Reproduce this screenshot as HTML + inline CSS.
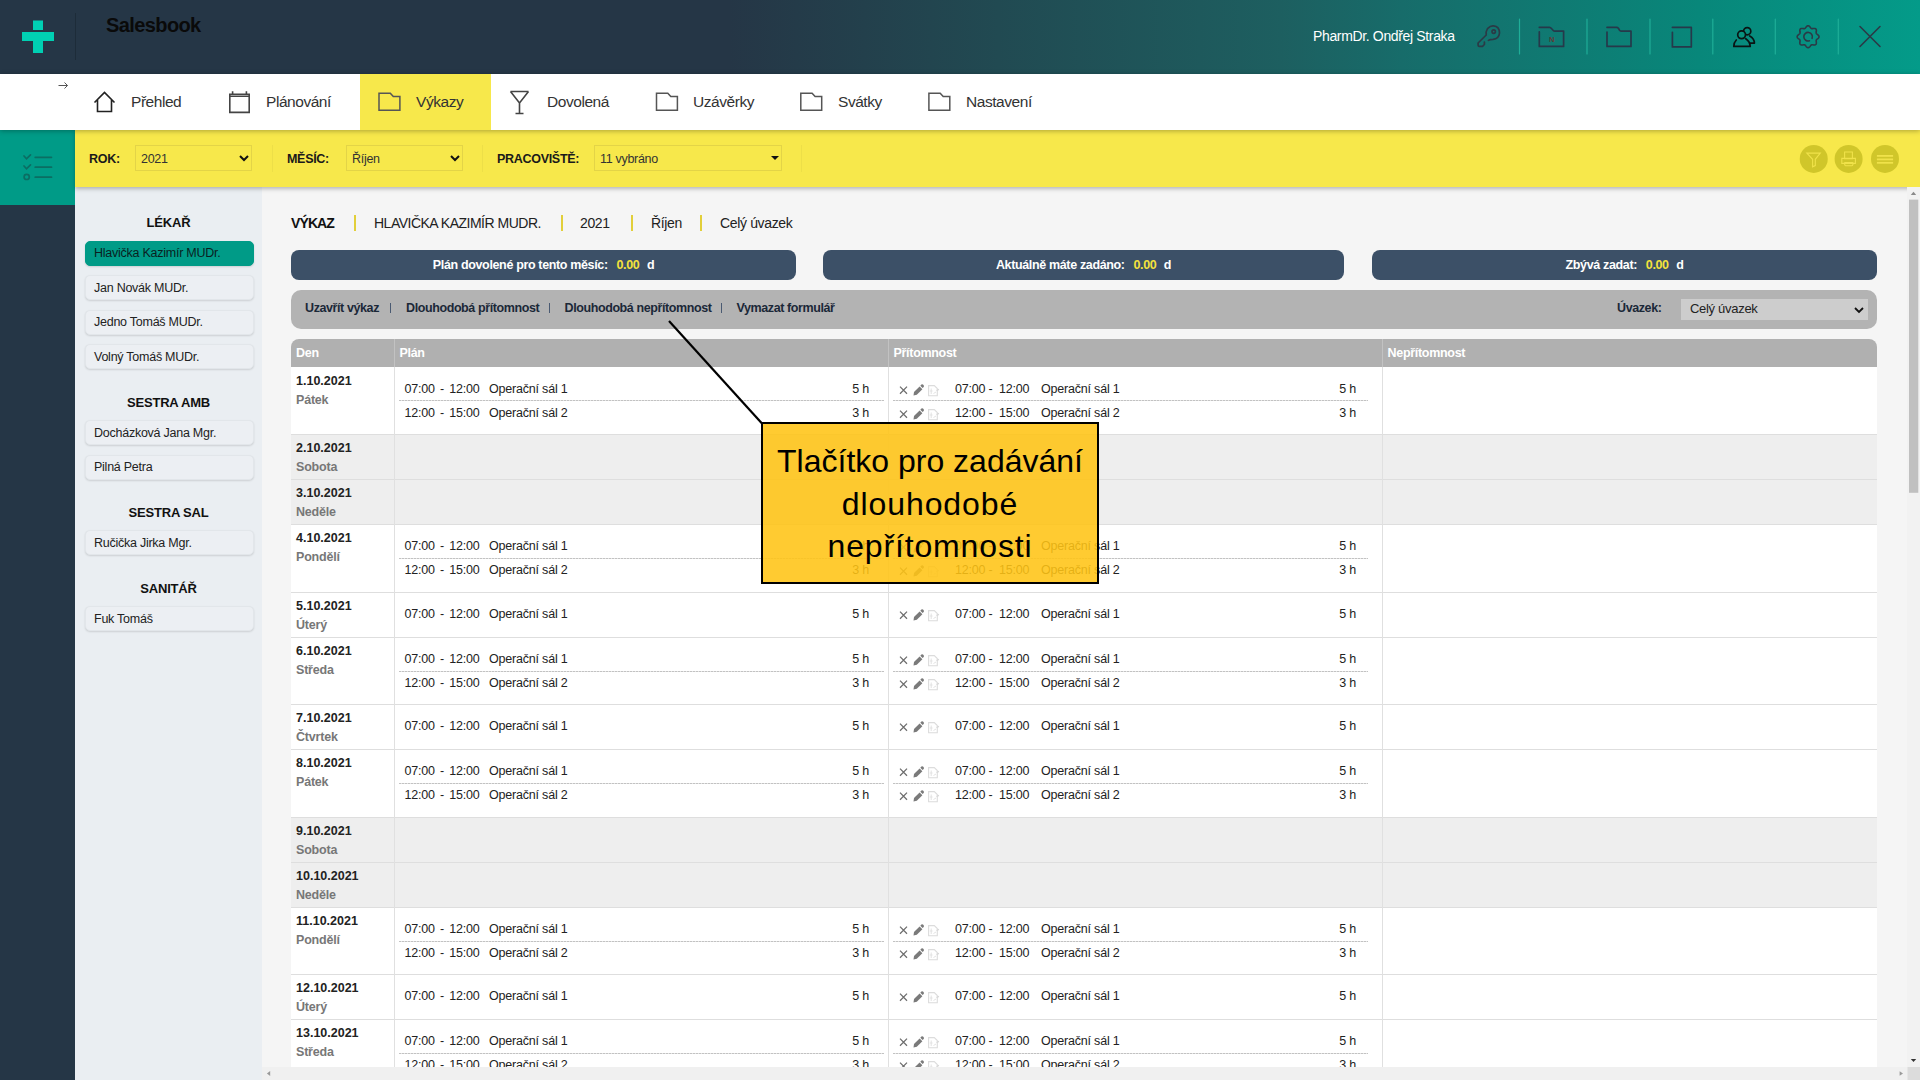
<!DOCTYPE html>
<html><head><meta charset="utf-8">
<style>
*{box-sizing:border-box;margin:0;padding:0}
html,body{width:1920px;height:1080px;overflow:hidden;background:#f5f5f5;font-family:"Liberation Sans",sans-serif;color:#222}
.abs{position:absolute}
#hdr{left:0;top:0;width:1920px;height:74px;background:linear-gradient(to right,#253646 0%,#253646 38%,#214a52 52%,#1d5f60 66.7%,#176c6a 73%,#08877a 88.5%,#049b89 100%)}
#nav{left:0;top:74px;width:1920px;height:56px;background:#fff}
#fbar{left:75px;top:130px;width:1845px;height:57px;background:#f7e84b;box-shadow:0 2px 4px rgba(0,0,0,.25);z-index:3}
#tealblk{left:0;top:130px;width:75px;height:75px;background:#009b87;z-index:2}
#lside{left:0;top:205px;width:75px;height:875px;background:#253646}
#emp{left:75px;top:186px;width:187px;height:894px;background:#eaeef2}
#main{left:262px;top:186px;width:1646px;height:880px;background:#f5f5f5;overflow:hidden}
.navt{position:absolute;top:19px;font-size:15.5px;color:#333;letter-spacing:-0.45px}
#nav{box-shadow:0 1px 5px rgba(0,0,0,.3);z-index:4}
.flab{position:absolute;top:22px;font-size:12.5px;font-weight:bold;color:#1a1a1a;letter-spacing:-0.3px}
.fsel{position:absolute;top:15px;height:25.5px;border:1px solid #e3d447;padding:5.5px 0 0 5px;font-size:12.5px;color:#333;letter-spacing:-0.3px}
.chev{position:absolute}
.fsep{position:absolute;top:15px;width:1px;height:27px;background:#eddf48}
.eh{position:absolute;left:0;width:187px;text-align:center;font-size:13px;margin-top:1px;font-weight:bold;color:#111;letter-spacing:-0.2px}
.eb{position:absolute;left:10px;width:169px;height:25px;border-radius:5px;background:#eceff3;border:1px solid #e2e6ea;box-shadow:0 1px 2px rgba(0,0,0,.13);padding:4.5px 0 0 8px;font-size:12.5px;color:#222;letter-spacing:-0.25px;white-space:nowrap}
.eb.act{background:#009b87;border-color:#009b87;color:#0a1f1f}
.ttl{position:absolute;top:29px;font-size:14px;color:#222;letter-spacing:-0.35px;white-space:nowrap}
.tsep{position:absolute;top:29px;width:2px;height:16px;background:#e2cf3a}
.ibar{position:absolute;top:63.5px;height:30px;border-radius:8px;background:#3c5067;color:#fff;font-size:12.5px;font-weight:bold;text-align:center;padding-top:8px;letter-spacing:-0.35px;white-space:nowrap}
.ibar span{color:#f4e23c;margin:0 1.2px 0 2.5px}
#tbar{left:29px;top:104px;width:1586px;height:38.5px;border-radius:10px;background:#b3b3b3}
.tb{position:absolute;top:11px;font-size:12.5px;font-weight:bold;color:#1b2838;letter-spacing:-0.4px;white-space:nowrap}
.tbs{position:absolute;top:13px;width:1px;height:10px;background:#4a5a72}
.usel{position:absolute;left:1390px;top:8.5px;width:187px;height:21px;background:#cdcdcd;font-size:13px;color:#222;padding:2px 0 0 9px;letter-spacing:-0.3px}
#tbl{position:absolute;left:0;top:0;width:1920px;height:1067px;overflow:hidden;pointer-events:none}
.thd{position:absolute;background:#b0b0b0;border-radius:8px 8px 0 0}
.tht{position:absolute;top:345.5px;font-size:12.5px;font-weight:bold;color:#fff;letter-spacing:-0.3px;line-height:15px}
.thv{position:absolute;top:339px;width:1px;height:28px;background:#c2c2c2}
.tr{position:absolute;left:291px;width:1586px;background:#fff;border-bottom:1px solid #dedede;box-sizing:content-box}
.tr.we{background:#eeeeee}
.tv{position:absolute;top:367px;width:1px;height:720px;background:#e0e0e0}
.td{position:absolute;left:296px;font-size:12.5px;font-weight:bold;color:#222;line-height:15px}
.tdn{position:absolute;left:296px;font-size:12.5px;font-weight:bold;color:#777;line-height:15px;letter-spacing:-0.2px}
.te{position:absolute;font-size:12.5px;color:#222;line-height:15px;white-space:nowrap;letter-spacing:-0.2px}
.te.hr{width:100px;text-align:right}
.ico{position:absolute}
.dash{position:absolute;height:1px;background:repeating-linear-gradient(to right,#c2c2c2 0 2px,#e4e4e4 2px 3px)}
#vscroll{left:1907px;top:187px;width:13px;height:880px;background:#f2f2f2;z-index:5}
#hscroll{left:262px;top:1067px;width:1658px;height:13px;background:#f0f0f0;z-index:5}
#callout{left:761px;top:422px;width:338px;height:162px;border:2.5px solid #000;background:rgba(255,196,20,.88);z-index:21;font-size:32px;line-height:42.7px;text-align:center;color:#000;padding-top:16px;letter-spacing:0}
</style></head>
<body>
<div id="hdr" class="abs">
  <svg class="abs" style="left:0;top:0" width="80" height="74">
    <rect x="33" y="20.5" width="10" height="9.5" fill="#00d0b3"/>
    <rect x="22" y="32" width="32" height="9" fill="#00d0b3"/>
    <rect x="33" y="41" width="10" height="12" fill="#00d0b3"/>
    <line x1="75.5" y1="13" x2="75.5" y2="60" stroke="#1d2c39" stroke-width="1"/>
  </svg>
  <div class="abs" style="left:106px;top:13.5px;font-size:20px;font-weight:bold;color:#0a0a0a;letter-spacing:-0.6px">Salesbook</div>
  <div class="abs" style="left:1313px;top:28px;font-size:14px;color:#fff;letter-spacing:-0.35px">PharmDr. Ondřej Straka</div>
  <svg class="abs" style="left:1460px;top:0" width="460" height="74" fill="none" stroke-linecap="round" stroke-linejoin="round">
    <g stroke="#1fae98" stroke-width="1.2">
      <line x1="59.5" y1="19" x2="59.5" y2="54"/>
      <line x1="127" y1="19" x2="127" y2="54"/>
      <line x1="190" y1="19" x2="190" y2="54"/>
      <line x1="252.8" y1="19" x2="252.8" y2="54"/>
      <line x1="315.3" y1="19" x2="315.3" y2="54"/>
      <line x1="378.3" y1="19" x2="378.3" y2="54"/>
    </g>
    <!-- key -->
    <g stroke="#2b3a46" stroke-width="1.7">
      <path d="M24.4 42 V44.5 L22.5 46.4 H19.5 Q18 46.4 18.1 44.5 V43 L26.2 35 Q25.7 31.5 27.5 28.6 Q30.5 25.6 33.5 25.9 Q39.5 26.5 39.5 33 Q39 38.8 33 39.4 Q30 39.4 28.4 40.4"/>
      <circle cx="33.7" cy="31.6" r="1.7"/>
    </g>
    <!-- folder N -->
    <g stroke="#26394a" stroke-width="1.7">
      <path d="M79.3 27.3 H89.5 Q90.5 27.3 91.5 28.5 L93 30.2 Q93.8 31.1 95 31.1 H103.6 V46.4 H79.3 V31.9"/>
    </g>
    <text x="89" y="41.6" font-size="7.6" font-weight="bold" fill="#5d3b36" font-family="Liberation Sans">N</text>
    <!-- folder -->
    <g stroke="#26394a" stroke-width="1.7">
      <path d="M147 27.3 H156.7 Q157.6 27.3 158.4 28.3 L159.6 30.2 Q160.4 31.2 161.5 31.2 H171 V46.4 H147 V32"/>
      <path d="M212.4 27.3 H231.3 V46.9 H212.4 V32.3"/>
    </g>
    <!-- users -->
    <g stroke="#0a1414" stroke-width="1.7">
      <circle cx="287.2" cy="31.2" r="3.6"/>
      <circle cx="281.6" cy="34.8" r="3.9" fill="#08917f"/>
      <path d="M276.3 40 Q273.8 42.5 273.8 46.4 H290.2 Q290 41.5 285.8 38.7"/>
      <path d="M289.7 35.9 Q294.4 38.5 294.4 43.1 H290.2"/>
    </g>
    <!-- gear -->
    <g stroke="#2b3a46" stroke-width="1.6">
      <path d="M359.05 36.70 L358.99 37.13 L358.82 37.54 L358.54 37.94 L358.20 38.30 L357.81 38.63 L357.41 38.94 L357.03 39.22 L356.71 39.50 L356.45 39.78 L356.28 40.09 L356.18 40.43 L356.16 40.81 L356.20 41.24 L356.26 41.70 L356.33 42.20 L356.37 42.71 L356.36 43.21 L356.27 43.68 L356.10 44.10 L355.84 44.44 L355.50 44.70 L355.08 44.87 L354.61 44.96 L354.11 44.97 L353.60 44.93 L353.10 44.86 L352.64 44.80 L352.21 44.76 L351.83 44.78 L351.49 44.88 L351.18 45.05 L350.90 45.31 L350.62 45.63 L350.34 46.01 L350.03 46.41 L349.70 46.80 L349.34 47.14 L348.94 47.42 L348.53 47.59 L348.10 47.65 L347.67 47.59 L347.26 47.42 L346.86 47.14 L346.50 46.80 L346.17 46.41 L345.86 46.01 L345.58 45.63 L345.30 45.31 L345.02 45.05 L344.71 44.88 L344.37 44.78 L343.99 44.76 L343.56 44.80 L343.10 44.86 L342.60 44.93 L342.09 44.97 L341.59 44.96 L341.12 44.87 L340.70 44.70 L340.36 44.44 L340.10 44.10 L339.93 43.68 L339.84 43.21 L339.83 42.71 L339.87 42.20 L339.94 41.70 L340.00 41.24 L340.04 40.81 L340.02 40.43 L339.92 40.09 L339.75 39.78 L339.49 39.50 L339.17 39.22 L338.79 38.94 L338.39 38.63 L338.00 38.30 L337.66 37.94 L337.38 37.54 L337.21 37.13 L337.15 36.70 L337.21 36.27 L337.38 35.86 L337.66 35.46 L338.00 35.10 L338.39 34.77 L338.79 34.46 L339.17 34.18 L339.49 33.90 L339.75 33.62 L339.92 33.31 L340.02 32.97 L340.04 32.59 L340.00 32.16 L339.94 31.70 L339.87 31.20 L339.83 30.69 L339.84 30.19 L339.93 29.72 L340.10 29.30 L340.36 28.96 L340.70 28.70 L341.12 28.53 L341.59 28.44 L342.09 28.43 L342.60 28.47 L343.10 28.54 L343.56 28.60 L343.99 28.64 L344.37 28.62 L344.71 28.52 L345.02 28.35 L345.30 28.09 L345.58 27.77 L345.86 27.39 L346.17 26.99 L346.50 26.60 L346.86 26.26 L347.26 25.98 L347.67 25.81 L348.10 25.75 L348.53 25.81 L348.94 25.98 L349.34 26.26 L349.70 26.60 L350.03 26.99 L350.34 27.39 L350.62 27.77 L350.90 28.09 L351.18 28.35 L351.49 28.52 L351.83 28.62 L352.21 28.64 L352.64 28.60 L353.10 28.54 L353.60 28.47 L354.11 28.43 L354.61 28.44 L355.08 28.53 L355.50 28.70 L355.84 28.96 L356.10 29.30 L356.27 29.72 L356.36 30.19 L356.37 30.69 L356.33 31.20 L356.26 31.70 L356.20 32.16 L356.16 32.59 L356.18 32.97 L356.28 33.31 L356.45 33.62 L356.71 33.90 L357.03 34.18 L357.41 34.46 L357.81 34.77 L358.20 35.10 L358.54 35.46 L358.82 35.86 L358.99 36.27 L359.05 36.70Z"/>
      <path d="M352.1 38.3 A4.3 4.3 0 1 0 349.4 40.8"/>
    </g>
    <!-- close -->
    <g stroke="#2b3a46" stroke-width="1.6">
      <path d="M400 26.5 L420 46.5 M420 26.5 L400 46.5"/>
    </g>
  </svg>
</div>
<div id="nav" class="abs">
  <svg class="abs" style="left:0;top:0" width="1100" height="56" fill="none" stroke="#333" stroke-width="1.6" stroke-linejoin="miter">
    <path d="M58.5 11.5 H67.5 M64.5 8.5 L67.5 11.5 L64.5 14.5" stroke="#555" stroke-width="1"/>
    <rect x="360" y="0" width="131" height="56" fill="#f7e84b" stroke="none"/>
    <!-- home -->
    <path d="M94.5 28.5 L104.5 18.5 L114.5 28.5 M97.5 25.5 V37.5 H111.5 V25.5" stroke="#222"/>
    <!-- calendar -->
    <path d="M229.8 20.2 H249.2 V38.4 H229.8 Z M232.6 17.2 V21 M246.4 17.2 V21 M229.8 22.2 H249.2" stroke="#444"/>
    <!-- folders -->
    <path d="M379 19.3 H390.3 L393.3 22.6 H399.9 V36.3 H379 Z" stroke="#555" stroke-width="1.5"/>
    <path d="M656.5 19.3 H667.8 L670.8 22.6 H677.4 V36.3 H656.5 Z" stroke="#555" stroke-width="1.5"/>
    <path d="M800.8 19.3 H812.1 L815.1 22.6 H821.7 V36.3 H800.8 Z" stroke="#555" stroke-width="1.5"/>
    <path d="M928.9 19.3 H940.2 L943.2 22.6 H949.8 V36.3 H928.9 Z" stroke="#555" stroke-width="1.5"/>
    <!-- martini -->
    <path d="M510.5 17.5 L528.5 17.5 M510.5 17.5 L519.5 29 L528.5 17.5 M519.5 29 V39.5 M515.5 39.5 H523.5" stroke="#444"/>
  </svg>
  <div class="navt" style="left:131px">Přehled</div>
  <div class="navt" style="left:266px">Plánování</div>
  <div class="navt" style="left:416px">Výkazy</div>
  <div class="navt" style="left:547px">Dovolená</div>
  <div class="navt" style="left:693px">Uzávěrky</div>
  <div class="navt" style="left:838px">Svátky</div>
  <div class="navt" style="left:966px">Nastavení</div>
</div>
<div id="tealblk" class="abs"><svg width="75" height="75" fill="none" stroke="#0b6e63" stroke-width="1.7" stroke-linecap="round">
<path d="M24 156 L26.5 158.8 L30.5 154.8" transform="translate(0,-130)"/>
<path d="M24 166 L26.5 168.8 L30.5 164.8" transform="translate(0,-130)"/>
<circle cx="26.7" cy="46.9" r="2.6"/>
<path d="M35.2 27.3 H51.5 M35.2 37.2 H51.5 M35.2 47.2 H51.5"/>
</svg></div>
<div id="fbar" class="abs">
  <div class="flab" style="left:14px">ROK:</div>
  <div class="fsel" style="left:60px;width:117px">2021<svg class="chev" width="10" height="7" style="left:103px;top:9px"><path d="M1 1 L5 5 L9 1" fill="none" stroke="#111" stroke-width="2"/></svg></div>
  <div class="fsep" style="left:197px"></div>
  <div class="flab" style="left:212px">MĚSÍC:</div>
  <div class="fsel" style="left:271px;width:117px">Říjen<svg class="chev" width="10" height="7" style="left:103px;top:9px"><path d="M1 1 L5 5 L9 1" fill="none" stroke="#111" stroke-width="2"/></svg></div>
  <div class="fsep" style="left:407px"></div>
  <div class="flab" style="left:422px">PRACOVIŠTĚ:</div>
  <div class="fsel" style="left:519px;width:188px">11 vybráno<svg class="chev" width="10" height="6" style="left:176px;top:9.5px"><path d="M0 0 L8 0 L4 4 Z" fill="#111"/></svg></div>
  <div class="fsep" style="left:726px"></div>
  <svg class="abs" style="left:1720px;top:0" width="125" height="56">
    <g fill="#d0c62a">
      <circle cx="18.75" cy="28.9" r="14"/>
      <circle cx="53.6" cy="28.9" r="14"/>
      <circle cx="90" cy="28.9" r="14"/>
    </g>
    <g fill="none" stroke="#f0e24a" stroke-width="1.1">
      <path d="M11.8 23.1 H25.3 L20.3 29.3 V35.6 L17.6 36.8 V29.3 Z"/>
      <path d="M49.6 22 H57.4 V28.6 H49.6 Z M46.8 28.4 H60.4 V33.4 H46.8 Z M49.8 32.5 H57.8 Q58.5 35.6 56.5 35.8 H50.8 Q49.3 35.6 49.8 32.5 Z"/>
    </g>
    <g stroke="#f0e24a" stroke-width="1.8">
      <line x1="81.9" y1="25.9" x2="98.1" y2="25.9"/>
      <line x1="81.9" y1="29.4" x2="98.1" y2="29.4"/>
      <line x1="81.9" y1="32.8" x2="98.1" y2="32.8"/>
    </g>
  </svg>
</div>
<div id="lside" class="abs"></div>
<div id="emp" class="abs">
  <div class="eh" style="top:28px">LÉKAŘ</div>
  <div class="eb act" style="top:54.5px">Hlavička Kazimír MUDr.</div>
  <div class="eb" style="top:89px">Jan Novák MUDr.</div>
  <div class="eb" style="top:123.5px">Jedno Tomáš MUDr.</div>
  <div class="eb" style="top:158px">Volný Tomáš MUDr.</div>
  <div class="eh" style="top:208px">SESTRA AMB</div>
  <div class="eb" style="top:234px">Docházková Jana Mgr.</div>
  <div class="eb" style="top:268.5px">Pilná Petra</div>
  <div class="eh" style="top:318px">SESTRA SAL</div>
  <div class="eb" style="top:344px">Ručička Jirka Mgr.</div>
  <div class="eh" style="top:394px">SANITÁŘ</div>
  <div class="eb" style="top:420px">Fuk Tomáš</div>
</div>
<div id="main" class="abs">
  <div class="ttl" style="left:29px;font-weight:bold;color:#111;letter-spacing:-0.9px">VÝKAZ</div>
  <div class="tsep" style="left:91.5px"></div>
  <div class="ttl" style="left:112px;letter-spacing:-0.5px">HLAVIČKA KAZIMÍR MUDR.</div>
  <div class="tsep" style="left:298.5px"></div>
  <div class="ttl" style="left:318px">2021</div>
  <div class="tsep" style="left:369px"></div>
  <div class="ttl" style="left:389px">Říjen</div>
  <div class="tsep" style="left:438px"></div>
  <div class="ttl" style="left:458px">Celý úvazek</div>

  <div class="ibar" style="left:29px;width:505px">Plán dovolené pro tento měsíc:&nbsp; <span>0.00</span>&nbsp; d</div>
  <div class="ibar" style="left:561px;width:521px">Aktuálně máte zadáno:&nbsp; <span>0.00</span>&nbsp; d</div>
  <div class="ibar" style="left:1110px;width:505px">Zbývá zadat:&nbsp; <span>0.00</span>&nbsp; d</div>

  <div id="tbar" class="abs">
    <span class="tb" style="left:14px">Uzavřít výkaz</span>
    <span class="tbs" style="left:99px"></span>
    <span class="tb" style="left:115px">Dlouhodobá přítomnost</span>
    <span class="tbs" style="left:258px"></span>
    <span class="tb" style="left:273.5px">Dlouhodobá nepřítomnost</span>
    <span class="tbs" style="left:429.5px"></span>
    <span class="tb" style="left:445.5px">Vymazat formulář</span>
    <span class="tb" style="left:1326px">Úvazek:</span>
    <div class="usel">Celý úvazek<svg width="10" height="7" style="position:absolute;left:173px;top:8px"><path d="M1 1 L5 5 L9 1" fill="none" stroke="#111" stroke-width="1.8"/></svg></div>
  </div>
</div>
<div id="tbl">
<!--TABLE-->
<div class="thd" style="left:291px;top:339px;width:1586px;height:28px"></div>
<div class="tht" style="left:296px">Den</div>
<div class="tht" style="left:399.5px">Plán</div>
<div class="tht" style="left:893.5px">Přítomnost</div>
<div class="tht" style="left:1387.5px">Nepřítomnost</div>
<div class="thv" style="left:394px"></div>
<div class="thv" style="left:888px"></div>
<div class="thv" style="left:1382px"></div>
<div class="tr" style="top:367px;height:67px"></div>
<div class="td" style="top:374px">1.10.2021</div>
<div class="tdn" style="top:392.9px">Pátek</div>
<div class="te" style="left:404.5px;top:381.8px">07:00<span style="margin:0 2px"> - </span>12:00</div>
<div class="te" style="left:489px;top:381.8px">Operační sál 1</div>
<div class="te hr" style="left:769px;top:381.8px">5 h</div>
<svg class="ico" style="left:899px;top:381.8px" width="44" height="16"><path d="M1 4.6 L8 11.7 M8 4.6 L1 11.7" stroke="#6d6d6d" stroke-width="1.25"/><path d="M14.5 13.6 L15 10 L20.6 4.4 L23.4 7.2 L17.8 12.8 Z" fill="#7a7a7a"/><path d="M21.3 3.7 L22.4 2.6 Q23.5 1.9 24.5 2.9 Q25.4 3.9 24.7 4.9 L23.6 6 Z" fill="#7a7a7a"/><path d="M29.6 3.6 H35.3 L38.3 6.6 V13.8 H29.6 Z" fill="none" stroke="#dcdcdc" stroke-width="1.1"/><path d="M32.2 6.5 V12 M30.8 9 H33.6 M34.5 11.5 L37 10" stroke="#e0e0e0" stroke-width="0.9"/><path d="M37.5 8.5 L40 7.3" stroke="#d8d8d8" stroke-width="1.3"/></svg>
<div class="te" style="left:955px;top:381.8px">07:00 -&nbsp; 12:00</div>
<div class="te" style="left:1041px;top:381.8px">Operační sál 1</div>
<div class="te hr" style="left:1256px;top:381.8px">5 h</div>
<div class="dash" style="left:399px;top:400px;width:485px"></div>
<div class="dash" style="left:893px;top:400px;width:475px"></div>
<div class="te" style="left:404.5px;top:405.6px">12:00<span style="margin:0 2px"> - </span>15:00</div>
<div class="te" style="left:489px;top:405.6px">Operační sál 2</div>
<div class="te hr" style="left:769px;top:405.6px">3 h</div>
<svg class="ico" style="left:899px;top:405.6px" width="44" height="16"><path d="M1 4.6 L8 11.7 M8 4.6 L1 11.7" stroke="#6d6d6d" stroke-width="1.25"/><path d="M14.5 13.6 L15 10 L20.6 4.4 L23.4 7.2 L17.8 12.8 Z" fill="#7a7a7a"/><path d="M21.3 3.7 L22.4 2.6 Q23.5 1.9 24.5 2.9 Q25.4 3.9 24.7 4.9 L23.6 6 Z" fill="#7a7a7a"/><path d="M29.6 3.6 H35.3 L38.3 6.6 V13.8 H29.6 Z" fill="none" stroke="#dcdcdc" stroke-width="1.1"/><path d="M32.2 6.5 V12 M30.8 9 H33.6 M34.5 11.5 L37 10" stroke="#e0e0e0" stroke-width="0.9"/><path d="M37.5 8.5 L40 7.3" stroke="#d8d8d8" stroke-width="1.3"/></svg>
<div class="te" style="left:955px;top:405.6px">12:00 -&nbsp; 15:00</div>
<div class="te" style="left:1041px;top:405.6px">Operační sál 2</div>
<div class="te hr" style="left:1256px;top:405.6px">3 h</div>
<div class="tr we" style="top:435px;height:44px"></div>
<div class="td" style="top:441px">2.10.2021</div>
<div class="tdn" style="top:459.9px">Sobota</div>
<div class="tr we" style="top:480px;height:44px"></div>
<div class="td" style="top:486px">3.10.2021</div>
<div class="tdn" style="top:504.9px">Neděle</div>
<div class="tr" style="top:525px;height:67px"></div>
<div class="td" style="top:531px">4.10.2021</div>
<div class="tdn" style="top:549.9px">Pondělí</div>
<div class="te" style="left:404.5px;top:538.8px">07:00<span style="margin:0 2px"> - </span>12:00</div>
<div class="te" style="left:489px;top:538.8px">Operační sál 1</div>
<div class="te hr" style="left:769px;top:538.8px">5 h</div>
<svg class="ico" style="left:899px;top:538.8px" width="44" height="16"><path d="M1 4.6 L8 11.7 M8 4.6 L1 11.7" stroke="#6d6d6d" stroke-width="1.25"/><path d="M14.5 13.6 L15 10 L20.6 4.4 L23.4 7.2 L17.8 12.8 Z" fill="#7a7a7a"/><path d="M21.3 3.7 L22.4 2.6 Q23.5 1.9 24.5 2.9 Q25.4 3.9 24.7 4.9 L23.6 6 Z" fill="#7a7a7a"/><path d="M29.6 3.6 H35.3 L38.3 6.6 V13.8 H29.6 Z" fill="none" stroke="#dcdcdc" stroke-width="1.1"/><path d="M32.2 6.5 V12 M30.8 9 H33.6 M34.5 11.5 L37 10" stroke="#e0e0e0" stroke-width="0.9"/><path d="M37.5 8.5 L40 7.3" stroke="#d8d8d8" stroke-width="1.3"/></svg>
<div class="te" style="left:955px;top:538.8px">07:00 -&nbsp; 12:00</div>
<div class="te" style="left:1041px;top:538.8px">Operační sál 1</div>
<div class="te hr" style="left:1256px;top:538.8px">5 h</div>
<div class="dash" style="left:399px;top:558px;width:485px"></div>
<div class="dash" style="left:893px;top:558px;width:475px"></div>
<div class="te" style="left:404.5px;top:562.6px">12:00<span style="margin:0 2px"> - </span>15:00</div>
<div class="te" style="left:489px;top:562.6px">Operační sál 2</div>
<div class="te hr" style="left:769px;top:562.6px">3 h</div>
<svg class="ico" style="left:899px;top:562.6px" width="44" height="16"><path d="M1 4.6 L8 11.7 M8 4.6 L1 11.7" stroke="#6d6d6d" stroke-width="1.25"/><path d="M14.5 13.6 L15 10 L20.6 4.4 L23.4 7.2 L17.8 12.8 Z" fill="#7a7a7a"/><path d="M21.3 3.7 L22.4 2.6 Q23.5 1.9 24.5 2.9 Q25.4 3.9 24.7 4.9 L23.6 6 Z" fill="#7a7a7a"/><path d="M29.6 3.6 H35.3 L38.3 6.6 V13.8 H29.6 Z" fill="none" stroke="#dcdcdc" stroke-width="1.1"/><path d="M32.2 6.5 V12 M30.8 9 H33.6 M34.5 11.5 L37 10" stroke="#e0e0e0" stroke-width="0.9"/><path d="M37.5 8.5 L40 7.3" stroke="#d8d8d8" stroke-width="1.3"/></svg>
<div class="te" style="left:955px;top:562.6px">12:00 -&nbsp; 15:00</div>
<div class="te" style="left:1041px;top:562.6px">Operační sál 2</div>
<div class="te hr" style="left:1256px;top:562.6px">3 h</div>
<div class="tr" style="top:593px;height:44px"></div>
<div class="td" style="top:599px">5.10.2021</div>
<div class="tdn" style="top:617.9px">Úterý</div>
<div class="te" style="left:404.5px;top:606.8px">07:00<span style="margin:0 2px"> - </span>12:00</div>
<div class="te" style="left:489px;top:606.8px">Operační sál 1</div>
<div class="te hr" style="left:769px;top:606.8px">5 h</div>
<svg class="ico" style="left:899px;top:606.8px" width="44" height="16"><path d="M1 4.6 L8 11.7 M8 4.6 L1 11.7" stroke="#6d6d6d" stroke-width="1.25"/><path d="M14.5 13.6 L15 10 L20.6 4.4 L23.4 7.2 L17.8 12.8 Z" fill="#7a7a7a"/><path d="M21.3 3.7 L22.4 2.6 Q23.5 1.9 24.5 2.9 Q25.4 3.9 24.7 4.9 L23.6 6 Z" fill="#7a7a7a"/><path d="M29.6 3.6 H35.3 L38.3 6.6 V13.8 H29.6 Z" fill="none" stroke="#dcdcdc" stroke-width="1.1"/><path d="M32.2 6.5 V12 M30.8 9 H33.6 M34.5 11.5 L37 10" stroke="#e0e0e0" stroke-width="0.9"/><path d="M37.5 8.5 L40 7.3" stroke="#d8d8d8" stroke-width="1.3"/></svg>
<div class="te" style="left:955px;top:606.8px">07:00 -&nbsp; 12:00</div>
<div class="te" style="left:1041px;top:606.8px">Operační sál 1</div>
<div class="te hr" style="left:1256px;top:606.8px">5 h</div>
<div class="tr" style="top:638px;height:66px"></div>
<div class="td" style="top:644px">6.10.2021</div>
<div class="tdn" style="top:662.9px">Středa</div>
<div class="te" style="left:404.5px;top:651.8px">07:00<span style="margin:0 2px"> - </span>12:00</div>
<div class="te" style="left:489px;top:651.8px">Operační sál 1</div>
<div class="te hr" style="left:769px;top:651.8px">5 h</div>
<svg class="ico" style="left:899px;top:651.8px" width="44" height="16"><path d="M1 4.6 L8 11.7 M8 4.6 L1 11.7" stroke="#6d6d6d" stroke-width="1.25"/><path d="M14.5 13.6 L15 10 L20.6 4.4 L23.4 7.2 L17.8 12.8 Z" fill="#7a7a7a"/><path d="M21.3 3.7 L22.4 2.6 Q23.5 1.9 24.5 2.9 Q25.4 3.9 24.7 4.9 L23.6 6 Z" fill="#7a7a7a"/><path d="M29.6 3.6 H35.3 L38.3 6.6 V13.8 H29.6 Z" fill="none" stroke="#dcdcdc" stroke-width="1.1"/><path d="M32.2 6.5 V12 M30.8 9 H33.6 M34.5 11.5 L37 10" stroke="#e0e0e0" stroke-width="0.9"/><path d="M37.5 8.5 L40 7.3" stroke="#d8d8d8" stroke-width="1.3"/></svg>
<div class="te" style="left:955px;top:651.8px">07:00 -&nbsp; 12:00</div>
<div class="te" style="left:1041px;top:651.8px">Operační sál 1</div>
<div class="te hr" style="left:1256px;top:651.8px">5 h</div>
<div class="dash" style="left:399px;top:671px;width:485px"></div>
<div class="dash" style="left:893px;top:671px;width:475px"></div>
<div class="te" style="left:404.5px;top:675.6px">12:00<span style="margin:0 2px"> - </span>15:00</div>
<div class="te" style="left:489px;top:675.6px">Operační sál 2</div>
<div class="te hr" style="left:769px;top:675.6px">3 h</div>
<svg class="ico" style="left:899px;top:675.6px" width="44" height="16"><path d="M1 4.6 L8 11.7 M8 4.6 L1 11.7" stroke="#6d6d6d" stroke-width="1.25"/><path d="M14.5 13.6 L15 10 L20.6 4.4 L23.4 7.2 L17.8 12.8 Z" fill="#7a7a7a"/><path d="M21.3 3.7 L22.4 2.6 Q23.5 1.9 24.5 2.9 Q25.4 3.9 24.7 4.9 L23.6 6 Z" fill="#7a7a7a"/><path d="M29.6 3.6 H35.3 L38.3 6.6 V13.8 H29.6 Z" fill="none" stroke="#dcdcdc" stroke-width="1.1"/><path d="M32.2 6.5 V12 M30.8 9 H33.6 M34.5 11.5 L37 10" stroke="#e0e0e0" stroke-width="0.9"/><path d="M37.5 8.5 L40 7.3" stroke="#d8d8d8" stroke-width="1.3"/></svg>
<div class="te" style="left:955px;top:675.6px">12:00 -&nbsp; 15:00</div>
<div class="te" style="left:1041px;top:675.6px">Operační sál 2</div>
<div class="te hr" style="left:1256px;top:675.6px">3 h</div>
<div class="tr" style="top:705px;height:44px"></div>
<div class="td" style="top:711px">7.10.2021</div>
<div class="tdn" style="top:729.9px">Čtvrtek</div>
<div class="te" style="left:404.5px;top:718.8px">07:00<span style="margin:0 2px"> - </span>12:00</div>
<div class="te" style="left:489px;top:718.8px">Operační sál 1</div>
<div class="te hr" style="left:769px;top:718.8px">5 h</div>
<svg class="ico" style="left:899px;top:718.8px" width="44" height="16"><path d="M1 4.6 L8 11.7 M8 4.6 L1 11.7" stroke="#6d6d6d" stroke-width="1.25"/><path d="M14.5 13.6 L15 10 L20.6 4.4 L23.4 7.2 L17.8 12.8 Z" fill="#7a7a7a"/><path d="M21.3 3.7 L22.4 2.6 Q23.5 1.9 24.5 2.9 Q25.4 3.9 24.7 4.9 L23.6 6 Z" fill="#7a7a7a"/><path d="M29.6 3.6 H35.3 L38.3 6.6 V13.8 H29.6 Z" fill="none" stroke="#dcdcdc" stroke-width="1.1"/><path d="M32.2 6.5 V12 M30.8 9 H33.6 M34.5 11.5 L37 10" stroke="#e0e0e0" stroke-width="0.9"/><path d="M37.5 8.5 L40 7.3" stroke="#d8d8d8" stroke-width="1.3"/></svg>
<div class="te" style="left:955px;top:718.8px">07:00 -&nbsp; 12:00</div>
<div class="te" style="left:1041px;top:718.8px">Operační sál 1</div>
<div class="te hr" style="left:1256px;top:718.8px">5 h</div>
<div class="tr" style="top:750px;height:67px"></div>
<div class="td" style="top:756px">8.10.2021</div>
<div class="tdn" style="top:774.9px">Pátek</div>
<div class="te" style="left:404.5px;top:763.8px">07:00<span style="margin:0 2px"> - </span>12:00</div>
<div class="te" style="left:489px;top:763.8px">Operační sál 1</div>
<div class="te hr" style="left:769px;top:763.8px">5 h</div>
<svg class="ico" style="left:899px;top:763.8px" width="44" height="16"><path d="M1 4.6 L8 11.7 M8 4.6 L1 11.7" stroke="#6d6d6d" stroke-width="1.25"/><path d="M14.5 13.6 L15 10 L20.6 4.4 L23.4 7.2 L17.8 12.8 Z" fill="#7a7a7a"/><path d="M21.3 3.7 L22.4 2.6 Q23.5 1.9 24.5 2.9 Q25.4 3.9 24.7 4.9 L23.6 6 Z" fill="#7a7a7a"/><path d="M29.6 3.6 H35.3 L38.3 6.6 V13.8 H29.6 Z" fill="none" stroke="#dcdcdc" stroke-width="1.1"/><path d="M32.2 6.5 V12 M30.8 9 H33.6 M34.5 11.5 L37 10" stroke="#e0e0e0" stroke-width="0.9"/><path d="M37.5 8.5 L40 7.3" stroke="#d8d8d8" stroke-width="1.3"/></svg>
<div class="te" style="left:955px;top:763.8px">07:00 -&nbsp; 12:00</div>
<div class="te" style="left:1041px;top:763.8px">Operační sál 1</div>
<div class="te hr" style="left:1256px;top:763.8px">5 h</div>
<div class="dash" style="left:399px;top:783px;width:485px"></div>
<div class="dash" style="left:893px;top:783px;width:475px"></div>
<div class="te" style="left:404.5px;top:787.6px">12:00<span style="margin:0 2px"> - </span>15:00</div>
<div class="te" style="left:489px;top:787.6px">Operační sál 2</div>
<div class="te hr" style="left:769px;top:787.6px">3 h</div>
<svg class="ico" style="left:899px;top:787.6px" width="44" height="16"><path d="M1 4.6 L8 11.7 M8 4.6 L1 11.7" stroke="#6d6d6d" stroke-width="1.25"/><path d="M14.5 13.6 L15 10 L20.6 4.4 L23.4 7.2 L17.8 12.8 Z" fill="#7a7a7a"/><path d="M21.3 3.7 L22.4 2.6 Q23.5 1.9 24.5 2.9 Q25.4 3.9 24.7 4.9 L23.6 6 Z" fill="#7a7a7a"/><path d="M29.6 3.6 H35.3 L38.3 6.6 V13.8 H29.6 Z" fill="none" stroke="#dcdcdc" stroke-width="1.1"/><path d="M32.2 6.5 V12 M30.8 9 H33.6 M34.5 11.5 L37 10" stroke="#e0e0e0" stroke-width="0.9"/><path d="M37.5 8.5 L40 7.3" stroke="#d8d8d8" stroke-width="1.3"/></svg>
<div class="te" style="left:955px;top:787.6px">12:00 -&nbsp; 15:00</div>
<div class="te" style="left:1041px;top:787.6px">Operační sál 2</div>
<div class="te hr" style="left:1256px;top:787.6px">3 h</div>
<div class="tr we" style="top:818px;height:44px"></div>
<div class="td" style="top:824px">9.10.2021</div>
<div class="tdn" style="top:842.9px">Sobota</div>
<div class="tr we" style="top:863px;height:44px"></div>
<div class="td" style="top:869px">10.10.2021</div>
<div class="tdn" style="top:887.9px">Neděle</div>
<div class="tr" style="top:908px;height:66px"></div>
<div class="td" style="top:914px">11.10.2021</div>
<div class="tdn" style="top:932.9px">Pondělí</div>
<div class="te" style="left:404.5px;top:921.8px">07:00<span style="margin:0 2px"> - </span>12:00</div>
<div class="te" style="left:489px;top:921.8px">Operační sál 1</div>
<div class="te hr" style="left:769px;top:921.8px">5 h</div>
<svg class="ico" style="left:899px;top:921.8px" width="44" height="16"><path d="M1 4.6 L8 11.7 M8 4.6 L1 11.7" stroke="#6d6d6d" stroke-width="1.25"/><path d="M14.5 13.6 L15 10 L20.6 4.4 L23.4 7.2 L17.8 12.8 Z" fill="#7a7a7a"/><path d="M21.3 3.7 L22.4 2.6 Q23.5 1.9 24.5 2.9 Q25.4 3.9 24.7 4.9 L23.6 6 Z" fill="#7a7a7a"/><path d="M29.6 3.6 H35.3 L38.3 6.6 V13.8 H29.6 Z" fill="none" stroke="#dcdcdc" stroke-width="1.1"/><path d="M32.2 6.5 V12 M30.8 9 H33.6 M34.5 11.5 L37 10" stroke="#e0e0e0" stroke-width="0.9"/><path d="M37.5 8.5 L40 7.3" stroke="#d8d8d8" stroke-width="1.3"/></svg>
<div class="te" style="left:955px;top:921.8px">07:00 -&nbsp; 12:00</div>
<div class="te" style="left:1041px;top:921.8px">Operační sál 1</div>
<div class="te hr" style="left:1256px;top:921.8px">5 h</div>
<div class="dash" style="left:399px;top:941px;width:485px"></div>
<div class="dash" style="left:893px;top:941px;width:475px"></div>
<div class="te" style="left:404.5px;top:945.6px">12:00<span style="margin:0 2px"> - </span>15:00</div>
<div class="te" style="left:489px;top:945.6px">Operační sál 2</div>
<div class="te hr" style="left:769px;top:945.6px">3 h</div>
<svg class="ico" style="left:899px;top:945.6px" width="44" height="16"><path d="M1 4.6 L8 11.7 M8 4.6 L1 11.7" stroke="#6d6d6d" stroke-width="1.25"/><path d="M14.5 13.6 L15 10 L20.6 4.4 L23.4 7.2 L17.8 12.8 Z" fill="#7a7a7a"/><path d="M21.3 3.7 L22.4 2.6 Q23.5 1.9 24.5 2.9 Q25.4 3.9 24.7 4.9 L23.6 6 Z" fill="#7a7a7a"/><path d="M29.6 3.6 H35.3 L38.3 6.6 V13.8 H29.6 Z" fill="none" stroke="#dcdcdc" stroke-width="1.1"/><path d="M32.2 6.5 V12 M30.8 9 H33.6 M34.5 11.5 L37 10" stroke="#e0e0e0" stroke-width="0.9"/><path d="M37.5 8.5 L40 7.3" stroke="#d8d8d8" stroke-width="1.3"/></svg>
<div class="te" style="left:955px;top:945.6px">12:00 -&nbsp; 15:00</div>
<div class="te" style="left:1041px;top:945.6px">Operační sál 2</div>
<div class="te hr" style="left:1256px;top:945.6px">3 h</div>
<div class="tr" style="top:975px;height:44px"></div>
<div class="td" style="top:981px">12.10.2021</div>
<div class="tdn" style="top:999.9px">Úterý</div>
<div class="te" style="left:404.5px;top:988.8px">07:00<span style="margin:0 2px"> - </span>12:00</div>
<div class="te" style="left:489px;top:988.8px">Operační sál 1</div>
<div class="te hr" style="left:769px;top:988.8px">5 h</div>
<svg class="ico" style="left:899px;top:988.8px" width="44" height="16"><path d="M1 4.6 L8 11.7 M8 4.6 L1 11.7" stroke="#6d6d6d" stroke-width="1.25"/><path d="M14.5 13.6 L15 10 L20.6 4.4 L23.4 7.2 L17.8 12.8 Z" fill="#7a7a7a"/><path d="M21.3 3.7 L22.4 2.6 Q23.5 1.9 24.5 2.9 Q25.4 3.9 24.7 4.9 L23.6 6 Z" fill="#7a7a7a"/><path d="M29.6 3.6 H35.3 L38.3 6.6 V13.8 H29.6 Z" fill="none" stroke="#dcdcdc" stroke-width="1.1"/><path d="M32.2 6.5 V12 M30.8 9 H33.6 M34.5 11.5 L37 10" stroke="#e0e0e0" stroke-width="0.9"/><path d="M37.5 8.5 L40 7.3" stroke="#d8d8d8" stroke-width="1.3"/></svg>
<div class="te" style="left:955px;top:988.8px">07:00 -&nbsp; 12:00</div>
<div class="te" style="left:1041px;top:988.8px">Operační sál 1</div>
<div class="te hr" style="left:1256px;top:988.8px">5 h</div>
<div class="tr" style="top:1020px;height:68px"></div>
<div class="td" style="top:1026px">13.10.2021</div>
<div class="tdn" style="top:1044.9px">Středa</div>
<div class="te" style="left:404.5px;top:1033.8px">07:00<span style="margin:0 2px"> - </span>12:00</div>
<div class="te" style="left:489px;top:1033.8px">Operační sál 1</div>
<div class="te hr" style="left:769px;top:1033.8px">5 h</div>
<svg class="ico" style="left:899px;top:1033.8px" width="44" height="16"><path d="M1 4.6 L8 11.7 M8 4.6 L1 11.7" stroke="#6d6d6d" stroke-width="1.25"/><path d="M14.5 13.6 L15 10 L20.6 4.4 L23.4 7.2 L17.8 12.8 Z" fill="#7a7a7a"/><path d="M21.3 3.7 L22.4 2.6 Q23.5 1.9 24.5 2.9 Q25.4 3.9 24.7 4.9 L23.6 6 Z" fill="#7a7a7a"/><path d="M29.6 3.6 H35.3 L38.3 6.6 V13.8 H29.6 Z" fill="none" stroke="#dcdcdc" stroke-width="1.1"/><path d="M32.2 6.5 V12 M30.8 9 H33.6 M34.5 11.5 L37 10" stroke="#e0e0e0" stroke-width="0.9"/><path d="M37.5 8.5 L40 7.3" stroke="#d8d8d8" stroke-width="1.3"/></svg>
<div class="te" style="left:955px;top:1033.8px">07:00 -&nbsp; 12:00</div>
<div class="te" style="left:1041px;top:1033.8px">Operační sál 1</div>
<div class="te hr" style="left:1256px;top:1033.8px">5 h</div>
<div class="dash" style="left:399px;top:1053px;width:485px"></div>
<div class="dash" style="left:893px;top:1053px;width:475px"></div>
<div class="te" style="left:404.5px;top:1057.6px">12:00<span style="margin:0 2px"> - </span>15:00</div>
<div class="te" style="left:489px;top:1057.6px">Operační sál 2</div>
<div class="te hr" style="left:769px;top:1057.6px">3 h</div>
<svg class="ico" style="left:899px;top:1057.6px" width="44" height="16"><path d="M1 4.6 L8 11.7 M8 4.6 L1 11.7" stroke="#6d6d6d" stroke-width="1.25"/><path d="M14.5 13.6 L15 10 L20.6 4.4 L23.4 7.2 L17.8 12.8 Z" fill="#7a7a7a"/><path d="M21.3 3.7 L22.4 2.6 Q23.5 1.9 24.5 2.9 Q25.4 3.9 24.7 4.9 L23.6 6 Z" fill="#7a7a7a"/><path d="M29.6 3.6 H35.3 L38.3 6.6 V13.8 H29.6 Z" fill="none" stroke="#dcdcdc" stroke-width="1.1"/><path d="M32.2 6.5 V12 M30.8 9 H33.6 M34.5 11.5 L37 10" stroke="#e0e0e0" stroke-width="0.9"/><path d="M37.5 8.5 L40 7.3" stroke="#d8d8d8" stroke-width="1.3"/></svg>
<div class="te" style="left:955px;top:1057.6px">12:00 -&nbsp; 15:00</div>
<div class="te" style="left:1041px;top:1057.6px">Operační sál 2</div>
<div class="te hr" style="left:1256px;top:1057.6px">3 h</div>
<div class="tv" style="left:394px"></div>
<div class="tv" style="left:888px"></div>
<div class="tv" style="left:1382px"></div>
<!--/TABLE-->
</div>
<div id="vscroll" class="abs"></div>
<svg class="abs" style="left:1908px;top:187px;z-index:6" width="12" height="880"><path d="M2.8 8 L5.5 4.8 L8.2 8 Z" fill="#8a8a8a"/><rect x="1" y="12.6" width="9.3" height="293.2" fill="#c0c0c0"/><path d="M2.8 872 L8.2 872 L5.5 875 Z" fill="#333"/></svg>
<div id="hscroll" class="abs"></div>
<svg class="abs" style="left:262px;top:1067px;z-index:6" width="1658" height="13"><path d="M8.2 4 L8.2 9 L4.9 6.5 Z" fill="#999"/><path d="M1637.6 4.2 L1637.6 8.8 L1641 6.5 Z" fill="#999"/><rect x="1645.5" y="0" width="12.5" height="13" fill="#dcdcdc"/></svg>
<svg class="abs" style="left:0;top:0;z-index:20" width="1920" height="1080"><line x1="669" y1="321" x2="762" y2="423.5" stroke="#000" stroke-width="2.2"/></svg>
<div id="callout" class="abs">Tlačítko pro zadávání<br><span style="letter-spacing:0.9px">dlouhodobé</span><br><span style="letter-spacing:0.85px">nepřítomnosti</span></div>
</body></html>
